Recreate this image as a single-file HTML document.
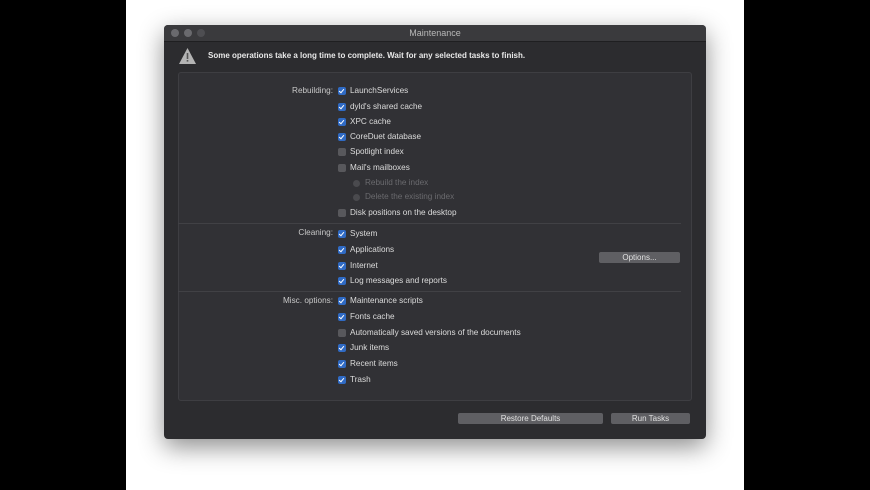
<!DOCTYPE html><html><head><style>
body{margin:0;width:870px;height:490px;background:#000;position:relative;overflow:hidden;font-family:"Liberation Sans",sans-serif;}
.bg{position:absolute;left:126px;top:0;width:618px;height:490px;background:#fff;}
.win{position:absolute;left:164px;top:25px;width:542px;height:414px;background:#2c2c2f;border-radius:4px;box-shadow:0 8px 25px rgba(0,0,0,.45);overflow:hidden;}
.title{position:absolute;left:0;top:0;width:542px;height:16px;background:#3a3a3d;border-bottom:1px solid #1f1f21;color:#b8b8b8;font-size:9px;text-align:center;line-height:17px;}
.dot{position:absolute;top:4px;width:8px;height:8px;border-radius:50%;background:#6a6a6e;}
.panel{position:absolute;left:14px;top:47px;width:512px;height:327px;background:#313135;border:1px solid #3e3e42;border-radius:3px;}
.t{position:absolute;color:#dcdcdc;font-size:8.2px;white-space:nowrap;line-height:10px;}
.lbl{position:absolute;color:#c8c8c8;font-size:8.2px;text-align:right;width:120px;line-height:10px;}
.cb{position:absolute;width:8px;height:8px;border-radius:2px;background:#2f6ac4;}
.cb::after{content:"";position:absolute;left:2px;top:0.5px;width:2px;height:4px;border:solid #fff;border-width:0 1.2px 1.2px 0;transform:rotate(40deg);}
.off{background:#58585c;}.off::after{display:none;}
.rad{position:absolute;width:7px;height:7px;border-radius:50%;background:#4a4a4e;}
.sep{position:absolute;left:178px;width:503px;height:1px;background:#414145;}
.btn{position:absolute;height:11px;background:#5f5f63;border-radius:2px;color:#e0e0e0;font-size:8px;text-align:center;line-height:11px;}
</style></head><body>
<div class="bg"></div>
<div class="win">
<div class="title">Maintenance</div>
<div class="dot" style="left:7px"></div><div class="dot" style="left:20px"></div><div class="dot" style="left:33px;background:#4e4e52"></div>
<svg style="position:absolute;left:14px;top:22px" width="19" height="18"><path d="M9.5 1 L18 17 L1 17 Z" fill="#b4b4b4"/><rect x="8.7" y="6" width="1.6" height="6" fill="#555"/><rect x="8.7" y="13" width="1.6" height="1.6" fill="#555"/></svg>
<div class="t" style="left:44px;top:26px;font-weight:bold;color:#e8e8e8;font-size:8px">Some operations take a long time to complete. Wait for any selected tasks to finish.</div>
<div class="panel"></div>
</div>
<div class="sep" style="top:223px"></div><div class="sep" style="top:291px"></div>
<div class="lbl" style="left:213px;top:86px">Rebuilding:</div>
<div class="lbl" style="left:213px;top:228px">Cleaning:</div>
<div class="lbl" style="left:213px;top:296px">Misc. options:</div>

<div class="cb" style="left:338px;top:87px"></div><div class="t" style="left:350px;top:86px">LaunchServices</div>
<div class="cb" style="left:338px;top:103px"></div><div class="t" style="left:350px;top:102px">dyld's shared cache</div>
<div class="cb" style="left:338px;top:118px"></div><div class="t" style="left:350px;top:117px">XPC cache</div>
<div class="cb" style="left:338px;top:133px"></div><div class="t" style="left:350px;top:132px">CoreDuet database</div>
<div class="cb off" style="left:338px;top:148px"></div><div class="t" style="left:350px;top:147px">Spotlight index</div>
<div class="cb off" style="left:338px;top:164px"></div><div class="t" style="left:350px;top:163px">Mail's mailboxes</div>
<div class="rad" style="left:353px;top:180px"></div><div class="t" style="left:365px;top:178px;color:#6a6a6e">Rebuild the index</div>
<div class="rad" style="left:353px;top:194px"></div><div class="t" style="left:365px;top:192px;color:#6a6a6e">Delete the existing index</div>
<div class="cb off" style="left:338px;top:209px"></div><div class="t" style="left:350px;top:208px">Disk positions on the desktop</div>

<div class="cb" style="left:338px;top:230px"></div><div class="t" style="left:350px;top:229px">System</div>
<div class="cb" style="left:338px;top:246px"></div><div class="t" style="left:350px;top:245px">Applications</div>
<div class="cb" style="left:338px;top:262px"></div><div class="t" style="left:350px;top:261px">Internet</div>
<div class="cb" style="left:338px;top:277px"></div><div class="t" style="left:350px;top:276px">Log messages and reports</div>
<div class="btn" style="left:599px;top:252px;width:81px">Options...</div>

<div class="cb" style="left:338px;top:297px"></div><div class="t" style="left:350px;top:296px">Maintenance scripts</div>
<div class="cb" style="left:338px;top:313px"></div><div class="t" style="left:350px;top:312px">Fonts cache</div>
<div class="cb off" style="left:338px;top:329px"></div><div class="t" style="left:350px;top:328px">Automatically saved versions of the documents</div>
<div class="cb" style="left:338px;top:344px"></div><div class="t" style="left:350px;top:343px">Junk items</div>
<div class="cb" style="left:338px;top:360px"></div><div class="t" style="left:350px;top:359px">Recent items</div>
<div class="cb" style="left:338px;top:376px"></div><div class="t" style="left:350px;top:375px">Trash</div>

<div class="btn" style="left:458px;top:413px;width:145px">Restore Defaults</div>
<div class="btn" style="left:611px;top:413px;width:79px">Run Tasks</div>
</body></html>
